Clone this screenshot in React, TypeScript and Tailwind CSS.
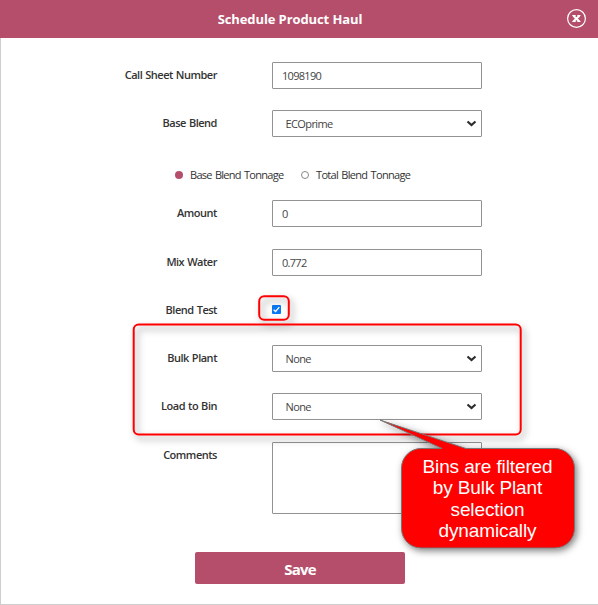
import type { ReactNode } from "react";

function Row({ label, className = "", children }: { label: string; className?: string; children: ReactNode }) {
  return (
    <div className={`flex ${className}`}>
      <label className="mr-[55px] flex h-[27px] w-[216px] items-center justify-end text-[11px] font-semibold tracking-[-0.48px] [word-spacing:0.6px] whitespace-nowrap text-[#333]">
        {label}
      </label>
      {children}
    </div>
  );
}

function TextField({ value }: { value: string }) {
  return (
    <input
      defaultValue={value}
      className="h-[27px] w-[210px] rounded-[1px] border border-[#929292] bg-white px-[9px] text-[11px] tracking-[-0.7px] text-[#444] outline-none"
    />
  );
}

function SelectField({ value }: { value: string }) {
  return (
    <div className="flex h-[27px] w-[210px] items-center justify-between rounded-[1px] border border-[#929292] bg-white pr-[4px] pl-[12.5px] text-[11px] text-[#444]">
      <span className="pt-[2px] tracking-[-0.6px]">{value}</span>
      <svg width="11" height="8" viewBox="0 0 11 8" fill="none" stroke="#2d2d2d" strokeWidth="2.2">
        <path d="M1.5 1.5 L5.5 5 L9.5 1.5" />
      </svg>
    </div>
  );
}

export default function App() {
  return (
    <div className="relative h-[605px] w-[598px] overflow-hidden bg-white font-['Open_Sans','Noto_Sans',sans-serif]">
      <div className="flex h-full flex-col border-b border-l border-[#cecece]">
        <header className="-ml-px flex h-[38px] shrink-0 items-center bg-[#b54e6a] pr-[11px] pl-[13px] text-white">
          <h1 className="flex-1 pt-px text-center text-[13px] font-bold tracking-[-0.1px]">Schedule Product Haul</h1>
          <button aria-label="Close" className="block">
            <svg width="20" height="20" viewBox="0 0 20 20" fill="none" stroke="white">
              <circle cx="9.5" cy="9.5" r="8.9" strokeWidth="1.2" />
              <path d="M6.4 6.7 L12.4 12.4 M12.4 6.7 L6.4 12.4" strokeWidth="2.1" />
              <path d="M5.3 6.5 h3.4 M10.3 6.5 H13.5 M5.3 12.5 h3.4 M10.3 12.5 H13.5" strokeWidth="1" />
            </svg>
          </button>
        </header>

        <form className="flex flex-col pt-6">
          <Row label="Call Sheet Number">
            <TextField value="1098190" />
          </Row>
          <Row label="Base Blend" className="mt-[21px]">
            <SelectField value="ECOprime" />
          </Row>
          <div className="mt-6 flex h-[27px] items-center pl-[174px] text-[11px] [word-spacing:1px] whitespace-nowrap text-[#333]">
            <span className="mr-[7px] size-2 rounded-full bg-[#b54e6a]" />
            <span className="w-[111px] pt-[2px] tracking-[-0.72px]">Base Blend Tonnage</span>
            <span className="mr-[7px] size-2 rounded-full border border-[#888]" />
            <span className="pt-[2px] tracking-[-0.68px]">Total Blend Tonnage</span>
          </div>
          <Row label="Amount" className="mt-3">
            <TextField value="0" />
          </Row>
          <Row label="Mix Water" className="mt-[22px]">
            <TextField value="0.772" />
          </Row>
          <Row label="Blend Test" className="mt-[21px]">
            <span className="mt-2 flex size-[9px] items-center justify-center rounded-[1px] bg-[#0878f5]">
              <svg width="9" height="9" viewBox="0 0 9 9" fill="none" stroke="white" strokeWidth="1.3">
                <path d="M1.6 4.7 L3.6 6.5 L7.3 2.2" />
              </svg>
            </span>
          </Row>
          <Row label="Bulk Plant" className="mt-[21px]">
            <SelectField value="None" />
          </Row>
          <Row label="Load to Bin" className="mt-[21px]">
            <SelectField value="None" />
          </Row>
          <Row label="Comments" className="mt-[22px]">
            <textarea className="block h-[72px] w-[210px] resize-none rounded-[1px] border border-[#929292] bg-white outline-none" />
          </Row>
          <button
            type="button"
            className="mt-[38px] ml-[194px] flex h-8 w-[210px] items-center justify-center rounded-[2px] bg-[#b54e6a] pt-[2px] text-[15px] font-bold tracking-[-0.8px] text-white"
          >
            Save
          </button>
        </form>
      </div>

      <svg className="pointer-events-none absolute inset-0" width="598" height="605" viewBox="0 0 598 605">
        <defs>
          <filter id="outlineShadow" x="-20%" y="-40%" width="140%" height="190%">
            <feDropShadow dx="3" dy="4" stdDeviation="3.5" floodColor="#000" floodOpacity="0.42" />
          </filter>
          <filter id="calloutShadow" x="-20%" y="-20%" width="140%" height="150%">
            <feDropShadow dx="2" dy="2.5" stdDeviation="3.5" floodColor="#000" floodOpacity="0.5" />
          </filter>
        </defs>
        <g fill="none" stroke="#ff0000" strokeWidth="2" filter="url(#outlineShadow)">
          <rect x="259.2" y="296.2" width="29.6" height="23.6" rx="5" />
          <rect x="133.7" y="324.5" width="387" height="110" rx="5" />
        </g>
        <g filter="url(#calloutShadow)">
          <path
            d="M421 448.5 H442 L380 420 L466 448.5 H555 A19.5 19.5 0 0 1 574.5 468 V528.5 A19.5 19.5 0 0 1 555 548 H421 A19.5 19.5 0 0 1 401.5 528.5 V468 A19.5 19.5 0 0 1 421 448.5 Z"
            fill="#ff0000"
            stroke="#777"
            strokeWidth="1"
          />
        </g>
      </svg>
      <div className="absolute top-[455.5px] left-[402px] w-[171px] text-center font-['Liberation_Sans',sans-serif] text-[19px] leading-[21.5px] tracking-[-0.12px] text-white">
        Bins are filtered
        <br />
        by Bulk Plant
        <br />
        selection
        <br />
        dynamically
      </div>
    </div>
  );
}
